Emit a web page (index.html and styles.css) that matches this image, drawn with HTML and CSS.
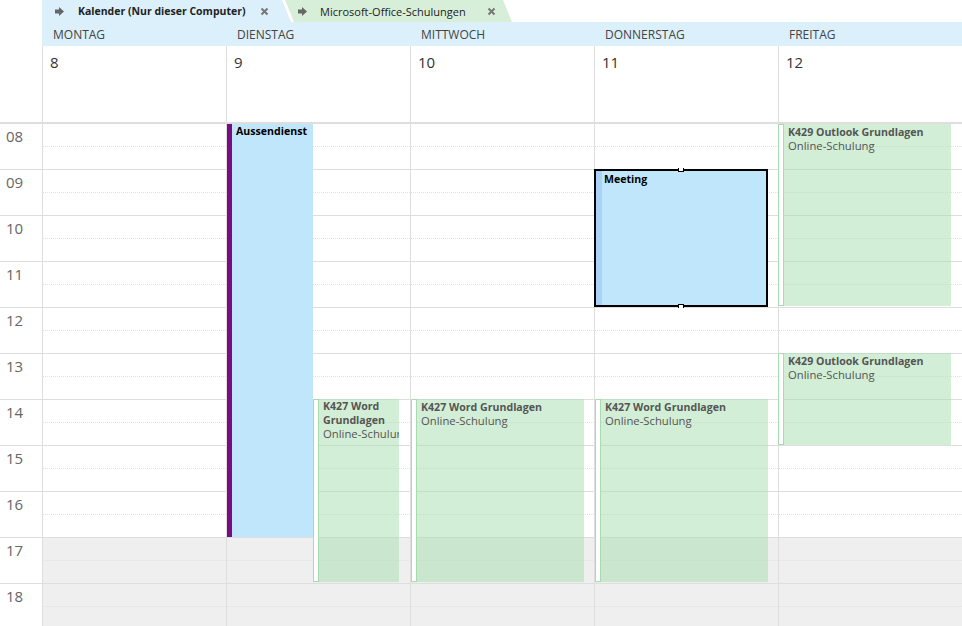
FILE: index.html
```html
<!DOCTYPE html>
<html>
<head>
	<meta charset="utf-8">
	<link rel="stylesheet" href="styles.css">
</head>
<body>
	<div class="tabs">
		<div class="tab tab-cal">
			<svg class="arrow" width="9" height="9" viewBox="0 0 9 9"><path d="M0 2.5h4V0l5 4.5L4 9V6.5H0z"/></svg>
			<span class="tab-title">Kalender (Nur dieser Computer)</span>
			<svg class="close" width="9" height="9" viewBox="0 0 9 9"><path d="M1.5 1.5l6 6M7.5 1.5l-6 6"/></svg>
		</div>
		<div class="tab tab-course">
			<svg class="arrow" width="9" height="9" viewBox="0 0 9 9"><path d="M0 2.5h4V0l5 4.5L4 9V6.5H0z"/></svg>
			<span class="tab-title">Microsoft-Office-Schulungen</span>
			<svg class="close" width="9" height="9" viewBox="0 0 9 9"><path d="M1.5 1.5l6 6M7.5 1.5l-6 6"/></svg>
		</div>
	</div>

	<div class="day-names">
		<div class="gutter"></div>
		<div class="day-name">Montag</div>
		<div class="day-name">Dienstag</div>
		<div class="day-name">Mittwoch</div>
		<div class="day-name">Donnerstag</div>
		<div class="day-name">Freitag</div>
	</div>

	<div class="dates">
		<div class="gutter"></div>
		<div class="date">8</div>
		<div class="date">9</div>
		<div class="date">10</div>
		<div class="date">11</div>
		<div class="date">12</div>
	</div>

	<div class="grid">
		<div class="times">
			<div class="hour">08</div>
			<div class="hour">09</div>
			<div class="hour">10</div>
			<div class="hour">11</div>
			<div class="hour">12</div>
			<div class="hour">13</div>
			<div class="hour">14</div>
			<div class="hour">15</div>
			<div class="hour">16</div>
			<div class="hour">17</div>
			<div class="hour">18</div>
		</div>

		<div class="col">
			<div class="slot"></div><div class="slot"></div><div class="slot"></div><div class="slot"></div>
			<div class="slot"></div><div class="slot"></div><div class="slot"></div><div class="slot"></div>
			<div class="slot"></div><div class="slot off"></div><div class="slot off"></div>
		</div>

		<div class="col">
			<div class="slot"></div><div class="slot"></div><div class="slot"></div><div class="slot"></div>
			<div class="slot"></div><div class="slot"></div><div class="slot"></div><div class="slot"></div>
			<div class="slot"></div><div class="slot off"></div><div class="slot off"></div>
			<div class="event event-away ev-tue-away">
				<div class="ev-title">Aussendienst</div>
			</div>
			<div class="event event-course ev-tue-word">
				<div class="ev-title">K427 Word Grundlagen</div>
				<div class="ev-sub">Online-Schulung</div>
			</div>
		</div>

		<div class="col">
			<div class="slot"></div><div class="slot"></div><div class="slot"></div><div class="slot"></div>
			<div class="slot"></div><div class="slot"></div><div class="slot"></div><div class="slot"></div>
			<div class="slot"></div><div class="slot off"></div><div class="slot off"></div>
			<div class="event event-course ev-wed-word">
				<div class="ev-title">K427 Word Grundlagen</div>
				<div class="ev-sub">Online-Schulung</div>
			</div>
		</div>

		<div class="col">
			<div class="slot"></div><div class="slot"></div><div class="slot"></div><div class="slot"></div>
			<div class="slot"></div><div class="slot"></div><div class="slot"></div><div class="slot"></div>
			<div class="slot"></div><div class="slot off"></div><div class="slot off"></div>
			<div class="event event-meeting ev-thu-meeting">
				<div class="ev-title">Meeting</div>
				<span class="handle handle-top"></span>
				<span class="handle handle-bottom"></span>
			</div>
			<div class="event event-course ev-thu-word">
				<div class="ev-title">K427 Word Grundlagen</div>
				<div class="ev-sub">Online-Schulung</div>
			</div>
		</div>

		<div class="col">
			<div class="slot"></div><div class="slot"></div><div class="slot"></div><div class="slot"></div>
			<div class="slot"></div><div class="slot"></div><div class="slot"></div><div class="slot"></div>
			<div class="slot"></div><div class="slot off"></div><div class="slot off"></div>
			<div class="event event-course ev-fri-outlook1">
				<div class="ev-title">K429 Outlook Grundlagen</div>
				<div class="ev-sub">Online-Schulung</div>
			</div>
			<div class="event event-course ev-fri-outlook2">
				<div class="ev-title">K429 Outlook Grundlagen</div>
				<div class="ev-sub">Online-Schulung</div>
			</div>
		</div>
	</div>
</body>
</html>
```

FILE: styles.css
```css
body {
	margin: 0;
	width: 962px;
	height: 626px;
	overflow: hidden;
	font-family: "Open Sans", "Noto Sans", Arial, sans-serif;
	color: #333;
	background: #fff;
}

/* tabs */

.tabs {
	display: flex;
	height: 22px;
	padding-left: 42px;
}

.tab {
	display: flex;
	align-items: center;
	height: 22px;
	font-size: 11px;
	color: #222;
}

.tab-cal {
	position: relative;
	z-index: 2;
	width: 249px;
	background: #dbf0fb;
	clip-path: polygon(0 0, 240px 0, 249px 100%, 0 100%);
}

.tab-course {
	width: 227px;
	margin-left: -6px;
	background: #d7efd9;
	clip-path: polygon(0 0, 218px 0, 227px 100%, 9px 100%);
}

.tab .arrow {
	fill: #666;
	margin: 0 0 0 13px;
}

.tab-cal .tab-title {
	font-weight: bold;
	font-size: 10.5px;
	margin-left: 14px;
	width: 182px;
}

.tab-course .tab-title {
	margin-left: 13px;
	width: 167px;
}

.tab .close {
	stroke: #777;
	stroke-width: 2;
}

/* header rows */

.day-names,
.dates {
	display: grid;
	grid-template-columns: 42px repeat(5, 184px);
}

.day-names {
	height: 24px;
}

.day-name {
	background: #dbf0fb;
	text-transform: uppercase;
	font-size: 12px;
	color: #444;
	padding: 4px 0 0 11px;
}

.dates {
	height: 76px;
	border-bottom: 2px solid #dedede;
}

.date {
	border-left: 1px solid #dedede;
	font-size: 15px;
	color: #333;
	padding: 6px 0 0 7px;
}

/* time grid */

.grid {
	display: grid;
	grid-template-columns: 42px repeat(5, 184px);
	align-items: start;
}

.hour {
	height: 46px;
	box-sizing: border-box;
	border-bottom: 1px solid #dedede;
	font-size: 15px;
	color: #666;
	padding: 2px 0 0 6px;
}

.col {
	position: relative;
	border-left: 1px solid #dedede;
}

.slot {
	height: 46px;
	box-sizing: border-box;
	border-bottom: 1px solid #dedede;
	background: #fff;
	position: relative;
}

.slot::after {
	content: "";
	position: absolute;
	left: 0;
	right: 0;
	top: 22px;
	border-top: 1px dotted #e2e2e2;
}

.slot.off {
	background: #efefef;
}

/* events */

.event {
	position: absolute;
	box-sizing: border-box;
	overflow: hidden;
	font-size: 11px;
	line-height: 14px;
}

.ev-title {
	font-weight: bold;
	font-size: 10.6px;
}

.event-away {
	background: #c0e6fb;
	border-left: 5px solid #790b84;
	padding: 0 0 0 4px;
	color: #000;
}

.event-meeting {
	background: #c0e6fb;
	border: 2px solid #000;
	box-shadow: inset 6px 0 0 #aad2f4;
	padding: 1px 0 0 8px;
	color: #000;
	overflow: visible;
}

.handle {
	position: absolute;
	left: 82px;
	width: 4px;
	height: 3px;
	background: #fff;
	border: 1px solid #000;
}

.handle-top {
	top: -3px;
	border-top: 0;
}

.handle-bottom {
	bottom: -3px;
	border-bottom: 0;
}

.event-course {
	background: rgba(165, 221, 173, 0.5);
	padding: 1px 0 0 10px;
	color: #555;
}

.event-course .ev-sub {
	font-size: 11.3px;
}

.event-course::before {
	content: "";
	position: absolute;
	left: 0;
	top: 0;
	bottom: 0;
	width: 6px;
	box-sizing: border-box;
	background: #fff;
	border: 1px solid #a8dbad;
}

.ev-tue-away {
	top: 0;
	left: 0;
	width: 86px;
	height: 413px;
}

.ev-tue-word {
	top: 275px;
	left: 86px;
	width: 86px;
	height: 183px;
	line-height: 13.5px;
}

.ev-tue-word .ev-sub {
	white-space: nowrap;
}

.ev-wed-word {
	top: 275px;
	left: 0;
	width: 173px;
	height: 183px;
}

.ev-thu-meeting {
	top: 45px;
	left: -1px;
	width: 174px;
	height: 138px;
}

.ev-thu-word {
	top: 275px;
	left: 0;
	width: 173px;
	height: 183px;
}

.ev-fri-outlook1 {
	top: 0;
	left: -1px;
	width: 173px;
	height: 182px;
}

.ev-fri-outlook2 {
	top: 229px;
	left: -1px;
	width: 173px;
	height: 92px;
}
```
